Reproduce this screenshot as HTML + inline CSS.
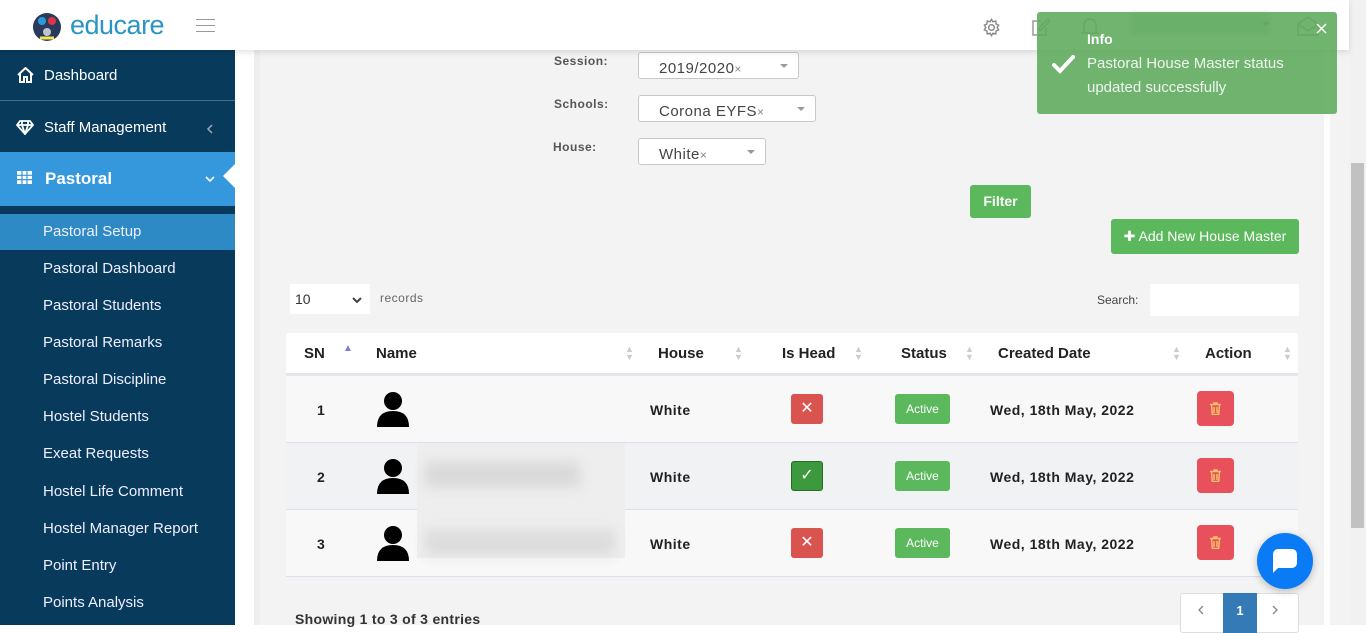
<!DOCTYPE html>
<html><head><style>
*{box-sizing:border-box;margin:0;padding:0}
body{width:1366px;height:625px;overflow:hidden;background:#fff;font-family:"Liberation Sans",sans-serif;position:relative}
.abs{position:absolute}
.hdr{left:0;top:0;width:1349px;height:50px;background:#fff;box-shadow:0 2px 6px rgba(0,0,0,.12);z-index:3}
.side{left:0;top:50px;width:235px;height:575px;background:#083a5c;color:#fff}
.side .it{position:absolute;left:0;width:235px;font-size:15px}
.sub{position:absolute;left:43px;font-size:15px;color:#eef}
.content{left:260px;top:50px;width:1064px;height:575px;background:#f3f3f3}
.lbl{font-size:12px;font-weight:bold;color:#555;letter-spacing:.5px}
.sel{background:#fff;border:1px solid #c8c8c8;border-radius:3px;height:27px;font-size:15px;color:#444;padding:7px 0 0 20px;letter-spacing:.5px}
.sel i{position:absolute;right:10px;top:11px;border:4px solid transparent;border-top-color:#999;border-bottom:0}
.btn{background:#5cb85c;color:#fff;font-weight:bold;font-size:14px;border-radius:3px;text-align:center}
.th{font-size:15px;font-weight:bold;color:#222;top:345px}
.srt{top:345px;color:#ccc;font-size:9px;line-height:8px}
.row{left:286px;width:1012px;height:67px;border-bottom:1px solid #dde}
.cell{font-size:14px;font-weight:bold;color:#222;letter-spacing:.5px}
.x{width:32px;height:30px;background:#d9534f;border-radius:3px;color:#fff;text-align:center;line-height:30px;font-size:16px}
.act{width:55px;height:30px;background:#5cb85c;border-radius:3px;color:#fff;font-size:12px;text-align:center;line-height:30px}
.del{width:37px;height:35px;background:#e8505b;border-radius:4px}
.av{width:34px;height:36px}
</style></head><body>
<div class="abs hdr">
 <svg class="abs" style="left:32px;top:12px" width="30" height="30" viewBox="0 0 30 30"><circle cx="15" cy="15" r="14" fill="#2a3a5a"/><circle cx="10" cy="9" r="4" fill="#2a9bd8"/><circle cx="20" cy="9" r="4" fill="#e0344a"/><circle cx="15" cy="20" r="4" fill="#fff" opacity=".7"/><path d="M8 26h14" stroke="#f3e650" stroke-width="3"/></svg>
 <div class="abs" style="left:70px;top:10px;font-size:27px;color:#2a95c4;letter-spacing:-.5px">educare</div>
 <div class="abs" style="left:196px;top:19px;width:19px;height:1px;background:#999;box-shadow:0 6px 0 #999,0 12px 0 #999"></div>
 <svg class="abs" style="left:982px;top:18px" width="19" height="19" viewBox="0 0 20 20" fill="none" stroke="#888" stroke-width="1.5"><circle cx="10" cy="10" r="3"/><path d="M10 1.5l1.5 2.5 3-.8.3 3 2.7 1.3-1.5 2.5 1.5 2.5-2.7 1.3-.3 3-3-.8-1.5 2.5-1.5-2.5-3 .8-.3-3-2.7-1.3L4 10 2.5 7.5l2.7-1.3.3-3 3 .8z"/></svg>
 <svg class="abs" style="left:1031px;top:17px" width="20" height="20" viewBox="0 0 20 20" fill="none" stroke="#999" stroke-width="1.5"><path d="M15 11v7H2V4h8"/><path d="M17 2l2 2-9 9H8v-2z"/></svg>
 <svg class="abs" style="left:1081px;top:16px" width="18" height="20" viewBox="0 0 18 20" fill="none" stroke="#999" stroke-width="1.5"><path d="M3 15V9a6 6 0 0112 0v6l2 2H1z"/></svg>
 <div class="abs" style="left:1130px;top:13px;width:140px;height:22px;background:#cfd8cf;filter:blur(2px)"></div>
 <div class="abs" style="left:1262px;top:22px;border:4px solid transparent;border-top-color:#999"></div>
 <svg class="abs" style="left:1297px;top:16px" width="22" height="20" viewBox="0 0 22 20" fill="none" stroke="#999" stroke-width="1.5"><path d="M1 8l10-7 10 7v11H1z M1 8l10 7 10-7"/></svg>
</div>
<div class="abs side">
 <div class="it" style="top:0;height:51px;border-bottom:1px solid #4a6f8a"><svg class="abs" style="left:17px;top:17px" width="17" height="16" viewBox="0 0 17 16" fill="none" stroke="#fff" stroke-width="2"><path d="M1 8L8.5 1 16 8M3 6v9h4v-5h3v5h4V6"/></svg><span class="abs" style="left:44px;top:17px">Dashboard</span></div>
 <div class="it" style="top:52px;height:50px"><svg class="abs" style="left:16px;top:18px" width="18" height="15" viewBox="0 0 18 15" fill="none" stroke="#fff" stroke-width="1.8"><path d="M4 1h10l3 4-8 9-8-9zM1 5h16M6 5l3 9 3-9M6 1l0 4M12 1v4"/></svg><span class="abs" style="left:44px;top:17px">Staff Management</span><svg class="abs" style="left:206px;top:22px" width="7" height="10" viewBox="0 0 7 10" fill="none" stroke="#9ab" stroke-width="1.5"><path d="M6 1L2 5l4 4"/></svg></div>
 <div class="it" style="top:102px;height:54px;background:#3598dc"><svg class="abs" style="left:17px;top:19px" width="15" height="13" viewBox="0 0 15 13"><rect width="15" height="13" fill="#fff"/><path d="M0 4.3h15M0 8.6h15M5 0v13M10 0v13" stroke="#3598dc" stroke-width="1.2"/></svg><span class="abs" style="left:45px;top:17px;font-size:17px;font-weight:bold">Pastoral</span><svg class="abs" style="left:205px;top:24px" width="10" height="7" viewBox="0 0 10 7" fill="none" stroke="#fff" stroke-width="1.6"><path d="M1 1l4 4 4-4"/></svg><span class="abs" style="left:223px;top:12px;border:12px solid transparent;border-right-color:#fff;border-left:0;width:0;height:0"></span></div>
 <div class="it" style="top:164px;height:36px;background:#2e8ac4"></div>
 <div class="sub" style="top:173px">Pastoral Setup</div>
 <div class="sub" style="top:210px">Pastoral Dashboard</div>
 <div class="sub" style="top:247px">Pastoral Students</div>
 <div class="sub" style="top:284px">Pastoral Remarks</div>
 <div class="sub" style="top:321px">Pastoral Discipline</div>
 <div class="sub" style="top:358px">Hostel Students</div>
 <div class="sub" style="top:395px">Exeat Requests</div>
 <div class="sub" style="top:433px">Hostel Life Comment</div>
 <div class="sub" style="top:470px">Hostel Manager Report</div>
 <div class="sub" style="top:507px">Point Entry</div>
 <div class="sub" style="top:544px">Points Analysis</div>
</div>
<div class="abs" style="left:254px;top:50px;width:6px;height:575px;background:#eee"></div>
<div class="abs content"></div>
<div class="abs" style="left:1330px;top:50px;width:19px;height:575px;background:#f3f3f3"></div>
<div class="abs" style="left:1349px;top:0;width:17px;height:625px;background:#f1f1f1"></div>
<div class="abs" style="left:1351px;top:163px;width:13px;height:365px;background:#c1c1c1"></div>

<div class="abs lbl" style="left:554px;top:54px">Session:</div>
<div class="abs lbl" style="left:554px;top:97px">Schools:</div>
<div class="abs lbl" style="left:553px;top:140px">House:</div>
<div class="abs sel" style="left:638px;top:52px;width:161px">2019/2020<span style="color:#888;font-size:12px">×</span><i></i></div>
<div class="abs sel" style="left:638px;top:95px;width:178px">Corona EYFS<span style="color:#888;font-size:12px">×</span><i></i></div>
<div class="abs sel" style="left:638px;top:138px;width:128px">White<span style="color:#888;font-size:12px">×</span><i></i></div>
<div class="abs btn" style="left:970px;top:185px;width:61px;height:33px;line-height:33px">Filter</div>
<div class="abs btn" style="left:1111px;top:219px;width:188px;height:35px;line-height:35px;font-weight:normal">✚ Add New House Master</div>

<div class="abs" style="left:290px;top:284px;width:80px;height:30px;background:#fff;font-size:14px;color:#333;padding:7px 0 0 5px">10<svg class="abs" style="left:62px;top:13px" width="10" height="6" viewBox="0 0 10 6" fill="none" stroke="#444" stroke-width="2"><path d="M1 1l4 4 4-4"/></svg></div>
<div class="abs" style="left:380px;top:291px;font-size:12px;color:#666;letter-spacing:.5px">records</div>
<div class="abs" style="left:1097px;top:293px;font-size:12px;color:#444">Search:</div>
<div class="abs" style="left:1150px;top:284px;width:149px;height:32px;background:#fff"></div>

<div class="abs" style="left:286px;top:333px;width:1012px;height:43px;background:#fff;border-bottom:3px solid #e3e6ea"></div>
<div class="abs th" style="left:304px">SN</div><div class="abs" style="left:343px;top:343px;color:#7a7ad8;font-size:10px">▲</div>
<div class="abs th" style="left:376px">Name</div><div class="abs srt" style="left:625px">▲<br>▼</div>
<div class="abs th" style="left:658px">House</div><div class="abs srt" style="left:734px">▲<br>▼</div>
<div class="abs th" style="left:782px">Is Head</div><div class="abs srt" style="left:854px">▲<br>▼</div>
<div class="abs th" style="left:901px">Status</div><div class="abs srt" style="left:965px">▲<br>▼</div>
<div class="abs th" style="left:998px">Created Date</div><div class="abs srt" style="left:1172px">▲<br>▼</div>
<div class="abs th" style="left:1205px">Action</div><div class="abs srt" style="left:1283px">▲<br>▼</div>

<div class="abs row" style="top:376px;background:#f8f8f8"></div>
<div class="abs row" style="top:443px;background:#f1f2f4"></div>
<div class="abs row" style="top:510px;background:#f8f8f8"></div>
<div class="abs" style="left:417px;top:443px;width:208px;height:115px;background:#eeeeef"></div>
<div class="abs" style="left:425px;top:462px;width:155px;height:25px;background:#d9d9d9;filter:blur(6px)"></div>
<div class="abs" style="left:425px;top:530px;width:190px;height:25px;background:#dcdcdc;filter:blur(6px)"></div>

<div class="abs cell" style="left:317px;top:402px">1</div>
<div class="abs cell" style="left:317px;top:469px">2</div>
<div class="abs cell" style="left:317px;top:536px">3</div>
<svg class="abs av" style="left:376px;top:391px" viewBox="0 0 34 36"><circle cx="17" cy="10" r="9"/><path d="M1 36Q1 20 17 20Q33 20 33 36Z"/></svg>
<svg class="abs av" style="left:376px;top:458px" viewBox="0 0 34 36"><circle cx="17" cy="10" r="9"/><path d="M1 36Q1 20 17 20Q33 20 33 36Z"/></svg>
<svg class="abs av" style="left:376px;top:525px" viewBox="0 0 34 36"><circle cx="17" cy="10" r="9"/><path d="M1 36Q1 20 17 20Q33 20 33 36Z"/></svg>
<div class="abs cell" style="left:650px;top:402px">White</div>
<div class="abs cell" style="left:650px;top:469px">White</div>
<div class="abs cell" style="left:650px;top:536px">White</div>
<div class="abs x" style="left:791px;top:394px">✕</div>
<div class="abs x" style="left:791px;top:461px;background:#3d993d;border:1px solid #2a6a2a;line-height:28px">✓</div>
<div class="abs x" style="left:791px;top:528px">✕</div>
<div class="abs act" style="left:895px;top:394px">Active</div>
<div class="abs act" style="left:895px;top:461px">Active</div>
<div class="abs act" style="left:895px;top:528px">Active</div>
<div class="abs cell" style="left:990px;top:402px">Wed, 18th May, 2022</div>
<div class="abs cell" style="left:990px;top:469px">Wed, 18th May, 2022</div>
<div class="abs cell" style="left:990px;top:536px">Wed, 18th May, 2022</div>
<div class="abs del" style="left:1197px;top:391px"><svg class="abs" style="left:13px;top:11px" width="11" height="13" viewBox="0 0 11 13" fill="none" stroke="#f7c46a" stroke-width="1.4"><path d="M0 2.5h11M4 2.5V1h3v1.5M1.5 2.5l.8 10h6.4l.8-10M4 5v6M7 5v6"/></svg></div>
<div class="abs del" style="left:1197px;top:458px"><svg class="abs" style="left:13px;top:11px" width="11" height="13" viewBox="0 0 11 13" fill="none" stroke="#f7c46a" stroke-width="1.4"><path d="M0 2.5h11M4 2.5V1h3v1.5M1.5 2.5l.8 10h6.4l.8-10M4 5v6M7 5v6"/></svg></div>
<div class="abs del" style="left:1197px;top:525px"><svg class="abs" style="left:13px;top:11px" width="11" height="13" viewBox="0 0 11 13" fill="none" stroke="#f7c46a" stroke-width="1.4"><path d="M0 2.5h11M4 2.5V1h3v1.5M1.5 2.5l.8 10h6.4l.8-10M4 5v6M7 5v6"/></svg></div>

<div class="abs" style="left:295px;top:611px;font-size:14px;font-weight:bold;color:#333;letter-spacing:.3px">Showing 1 to 3 of 3 entries</div>
<div class="abs" style="left:1180px;top:593px;width:119px;height:40px;background:#fff;border:1px solid #ddd;border-radius:3px"></div>
<svg class="abs" style="left:1198px;top:605px" width="6" height="10" viewBox="0 0 6 10" fill="none" stroke="#888" stroke-width="1.3"><path d="M5 1L1 5l4 4"/></svg>
<div class="abs" style="left:1223px;top:593px;width:34px;height:40px;background:#337ab7;color:#fff;font-size:13px;font-weight:bold;text-align:center;padding-top:10px">1</div>
<svg class="abs" style="left:1272px;top:605px" width="6" height="10" viewBox="0 0 6 10" fill="none" stroke="#888" stroke-width="1.3"><path d="M1 1l4 4-4 4"/></svg>

<div class="abs" style="left:1257px;top:533px;width:56px;height:56px;border-radius:50%;background:#0b7bf5;box-shadow:0 2px 8px rgba(0,0,0,.25)"><div class="abs" style="left:16px;top:16px;width:24px;height:19px;background:#fff;border-radius:5px"></div><div class="abs" style="left:16px;top:30px;border:5px solid transparent;border-left-color:#fff;border-top-color:#fff"></div></div>

<div class="abs" style="left:1037px;top:12px;width:300px;height:102px;background:rgba(92,170,92,.88);border-radius:3px;z-index:5;color:#fff">
 <div class="abs" style="left:50px;top:19px;font-size:14px;font-weight:bold">Info</div>
 <div class="abs" style="left:50px;top:40px;font-size:15px;line-height:24px;color:#eef5ee">Pastoral House Master status<br>updated successfully</div>
 <svg class="abs" style="left:14px;top:42px" width="25" height="20" viewBox="0 0 25 20" fill="none" stroke="#fff" stroke-width="4" stroke-linecap="round"><path d="M3 11l6 6L22 3"/></svg>
 <svg class="abs" style="left:279px;top:11px" width="11" height="11" viewBox="0 0 11 11" stroke="#fff" stroke-width="1.5"><path d="M1 1l9 9M10 1l-9 9"/></svg>
</div>
</body></html>
